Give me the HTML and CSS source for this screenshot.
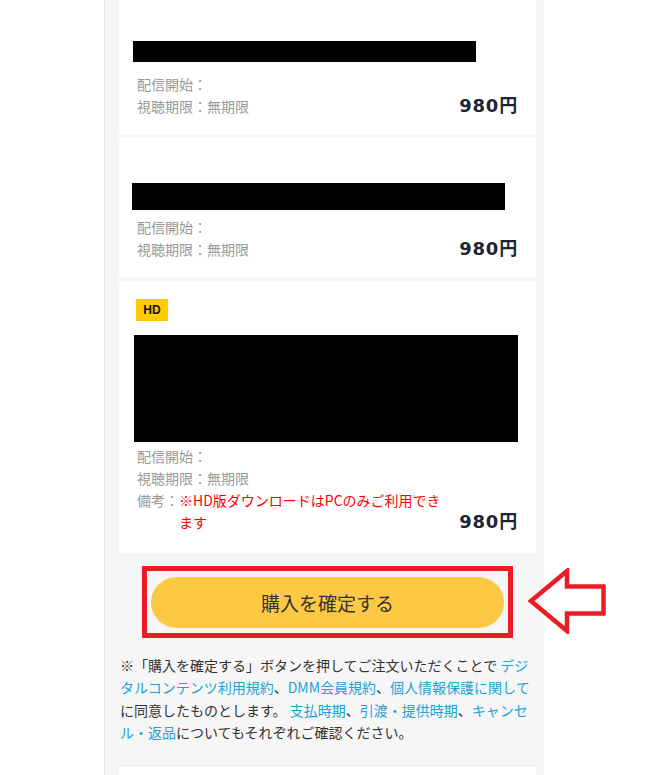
FILE: index.html
```html
<!DOCTYPE html>
<html lang="ja">
<head>
    <meta charset="UTF-8">
    <meta name="viewport" content="width=device-width, initial-scale=1.0">
    <title>購入確認</title>
    <link rel="stylesheet" href="styles.css">
</head>
<body>
    <div class="cart">
        <div class="item item-first">
            <div class="redact redact-a"></div>
            <div class="item-row">
                <div class="item-meta">
                    <div class="meta-line"><span class="meta-label">配信開始：</span></div>
                    <div class="meta-line"><span class="meta-label">視聴期限：</span><span class="meta-value">無期限</span></div>
                </div>
                <p class="item-price">980円</p>
            </div>
        </div>

        <div class="item item-second">
            <div class="redact redact-b"></div>
            <div class="item-row">
                <div class="item-meta">
                    <div class="meta-line"><span class="meta-label">配信開始：</span></div>
                    <div class="meta-line"><span class="meta-label">視聴期限：</span><span class="meta-value">無期限</span></div>
                </div>
                <p class="item-price">980円</p>
            </div>
        </div>

        <div class="item item-third">
            <span class="badge-hd">HD</span>
            <div class="redact redact-c"></div>
            <div class="item-row">
                <div class="item-meta">
                    <div class="meta-line"><span class="meta-label">配信開始：</span></div>
                    <div class="meta-line"><span class="meta-label">視聴期限：</span><span class="meta-value">無期限</span></div>
                    <div class="meta-line meta-note"><span class="meta-label">備考：</span><span class="meta-warn">※HD版ダウンロードはPCのみご利用できます</span></div>
                </div>
                <p class="item-price">980円</p>
            </div>
        </div>

        <div class="confirm">
            <div class="confirm-box">
                <button type="button" class="confirm-button">購入を確定する</button>
            </div>
            <!-- 注釈の矢印 -->
            <svg class="confirm-arrow" width="80" height="66" viewBox="0 0 80 66">
                <polygon points="4,33 40,3 40,18.5 76.5,18.5 76.5,45.5 40,45.5 40,63" fill="none" stroke="#ed1c24" stroke-width="4.5" stroke-linejoin="miter"/>
            </svg>
        </div>

        <p class="terms">
            ※「購入を確定する」ボタンを押してご注文いただくことで <a href="#">デジタルコンテンツ利用規約</a>、<a href="#">DMM会員規約</a>、<a href="#">個人情報保護に関して</a>に同意したものとします。 <a href="#">支払時期</a>、<a href="#">引渡・提供時期</a>、<a href="#">キャンセル・返品</a>についてもそれぞれご確認ください。
        </p>

        <div class="next-block"></div>
    </div>
</body>
</html>
```

FILE: styles.css
```css
html, body {
    margin: 0;
    background: #fff;
}

body {
    font-family: "Noto Sans CJK JP", "Noto Sans", sans-serif;
    font-size: 14px;
    color: #333;
}

.cart {
    margin-left: 104px;
    width: 417px;
    padding: 0 8px 0 14px;
    background-color: #f6f6f6;
    border-left: 1px solid #e4e4e4;
}

.item {
    background-color: #fff;
    padding: 18px 18px 18px;
}

.item-first {
    padding-top: 41px;
}

.item-second {
    margin-top: 2px;
    padding-top: 46px;
    padding-bottom: 17px;
}

.item-third {
    margin-top: 4px;
    padding-bottom: 20px;
}

.redact {
    background-color: #000;
}

.redact-a {
    width: 343px;
    height: 21px;
    margin: 0 0 11px -4px;
}

.redact-b {
    width: 373px;
    height: 27px;
    margin: 0 0 6px -5px;
}

.redact-c {
    width: 384px;
    height: 107px;
    margin: 0 0 3px -3px;
}

.badge-hd {
    display: block;
    width: 32px;
    height: 22px;
    margin: 0 0 14px -1px;
    background-color: #ffcc00;
    color: #111;
    font-family: "Liberation Sans", Arial, sans-serif;
    font-size: 12px;
    font-weight: bold;
    line-height: 22px;
    text-align: center;
}

.item-row {
    display: flex;
    align-items: flex-end;
    gap: 15px;
}

.item-meta {
    flex: 1;
    min-width: 0;
}

.meta-line {
    line-height: 22px;
    color: #999;
}

.meta-note {
    display: flex;
}

.meta-label {
    flex-shrink: 0;
}

.meta-warn {
    color: #ff0000;
}

.item-price {
    margin: 0;
    font-family: "DejaVu Sans", "Noto Sans CJK JP", sans-serif;
    font-size: 18px;
    font-weight: bold;
    letter-spacing: 0.8px;
    line-height: 22px;
    color: #1c2536;
    white-space: nowrap;
}

.confirm {
    position: relative;
    margin-top: 13px;
}

.confirm-box {
    width: 353px;
    margin: 0 auto;
    padding: 6px 4px 5px;
    border: 5px solid #ed1c24;
}

.confirm-button {
    display: block;
    width: 100%;
    height: 51px;
    border: none;
    border-radius: 26px;
    background-color: #fdc945;
    color: #333;
    font-family: "Noto Sans CJK JP", sans-serif;
    font-size: 19px;
    cursor: pointer;
}

.confirm-arrow {
    position: absolute;
    left: 408px;
    top: 2px;
}

.terms {
    margin: 16px 0 0;
    padding: 0 1px;
    line-height: 22.3px;
}

.terms a {
    color: #1ba3d8;
    text-decoration: none;
}

.next-block {
    margin-top: 22px;
    height: 10px;
    background-color: #fff;
    border-top: 1px solid #e6e6e6;
}
```
